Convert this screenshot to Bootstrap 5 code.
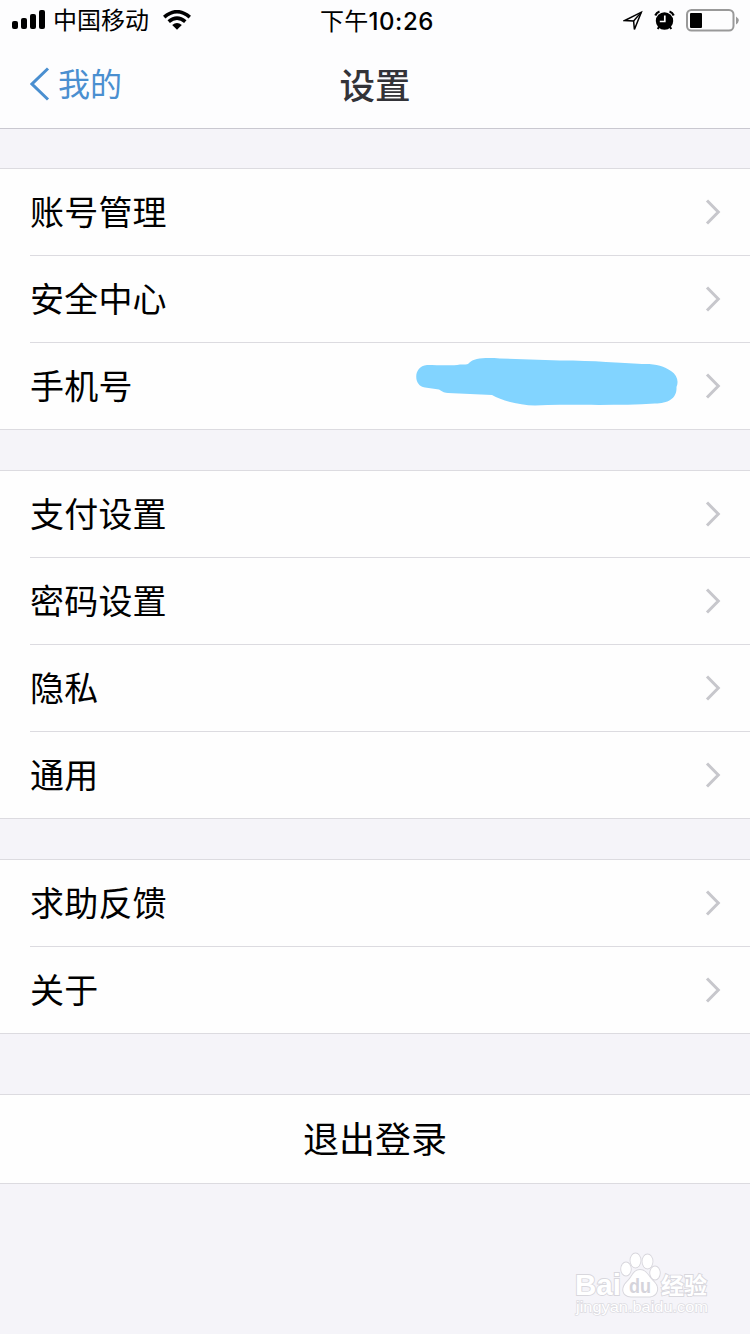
<!DOCTYPE html>
<html lang="zh-CN">
<head>
<meta charset="utf-8">
<meta name="viewport" content="width=device-width, initial-scale=1">
<title>设置</title>
<link href="https://cdn.jsdelivr.net/npm/bootstrap@5.3.0/dist/css/bootstrap.min.css" rel="stylesheet">
<style>
body{font-family:"Liberation Sans","Noto Sans CJK SC",sans-serif;background:#f5f4f9;color:#000;min-height:1334px;overflow-x:hidden}
.topbar{height:129px;background:#fdfdfe;border-bottom:1px solid #c9c8d0;margin-bottom:39px}
.status{height:40px;font-size:24px;line-height:40px}
.status-left{padding-left:12px;width:300px}
.status-left span{padding:2px 0 0 7px}
.status-right{padding-right:11px;width:300px}
.clock{font-family:Inter,"Noto Sans CJK SC",sans-serif;font-weight:500;font-size:24px;letter-spacing:.6px;padding-left:4px}
.clock .zh{font-family:"Noto Sans CJK SC",sans-serif;font-weight:400;letter-spacing:.2px}
.titlebar{height:88px}
.back{color:#4a8fd0;font-size:32px;line-height:40px;padding-left:30px;width:250px}
.back span{padding-top:2px}
.heading{font-size:35.5px;font-weight:500;line-height:40px;color:#333338;font-family:"Noto Sans CJK SC",sans-serif}
.settings{background:#fefefe;border-top:1px solid #dcdbe0;border-bottom:1px solid #dcdbe0;margin-bottom:40px;padding-left:30px;border-radius:0}
.settings .list-group-item{height:87px;border:0;border-bottom:1px solid #dcdbe0;background:transparent;color:#000;font-size:34px;line-height:40px;letter-spacing:.2px;padding:0 29px 0 0}
.settings .list-group-item span{padding-top:2px}
.settings .list-group-item:last-child{height:86px;border-bottom:0}
.logout{height:90px;font-size:36px;margin-top:60px;color:#000;background:#fefefe;border:solid #dcdbe0;border-width:1px 0;border-radius:0}
.logout:hover{background:#fff}
.logout span{padding-top:4px}
.scribble{margin:0 26px 8px 0}
.brand{right:38px;bottom:12px}
</style>
</head>
<body class="position-relative">
<header class="topbar">
  <div class="status d-flex justify-content-between">
    <div class="status-left d-flex align-items-center">
      <svg width="34" height="22" viewBox="0 0 34 22"><rect x="0" y="12" width="6" height="8" rx="2"/><rect x="9" y="9" width="6" height="11" rx="2"/><rect x="18" y="5" width="6" height="15" rx="2"/><rect x="27" y="1" width="6" height="19" rx="2"/></svg>
      <span>中国移动</span>
      <svg style="margin-left:14px" width="28" height="20" viewBox="0 0 28 20"><g fill="none" stroke="#000" stroke-width="3.6"><path d="M1.2 7.2Q14-3.8 26.800 7.200"/><path d="M5.700 11.700Q14 4.500 22.300 11.700"/></g><path d="M9.200 15Q14 11.200 18.800 15L14 19.700Z"/></svg>
    </div>
    <div class="clock"><span class="zh">下午</span>10:26</div>
    <div class="status-right d-flex align-items-center justify-content-end">
      <svg width="116" height="26" viewBox="0 0 116 26">
        <path d="M1.800 13.500 18.300 5.200 11.400 22.500 10.600 14Z" fill="none" stroke="#000" stroke-width="1.500"/><path d="M10.600 14 18.300 5.200" stroke="#000" stroke-width="1.400"/>
        <circle cx="41.500" cy="14" r="8.700"/><path d="M32.300 8.500Q33.500 5.500 36.500 4.500M50.700 8.500Q49.500 5.500 46.500 4.500" fill="none" stroke="#000" stroke-width="2.200"/><path d="m36 20-1.300 2m12.300-2 1.300 2" stroke="#000" stroke-width="2"/><path d="M41.800 8.500v6h-5" fill="none" stroke="#fff" stroke-width="1.700"/>
        <rect x="64" y="3" width="46.500" height="20.500" rx="4.500" fill="none" stroke="#999" stroke-width="2"/><rect x="67" y="6" width="12" height="15" rx="1"/><path d="M113 9.500q5.500 4 0 8Z" fill="#999"/>
      </svg>
    </div>
  </div>
  <nav class="titlebar d-flex align-items-center justify-content-between">
    <div class="back d-flex align-items-center"><svg width="20" height="34" viewBox="0 0 20 34"><path d="M18 1.500 2 17 18 32.500" fill="none" stroke="#4a8fd0" stroke-width="3"/></svg><span class="ps-2">我的</span></div>
    <h1 class="heading m-0">设置</h1>
    <div class="back"></div>
  </nav>
</header>
<svg class="d-none"><symbol id="chev" viewBox="0 0 16 28"><path d="M2 2.500 13.300 14 2 25.500" fill="none" stroke="#c7c7cc" stroke-width="3"/></symbol></svg>
<main>
  <div class="list-group settings">
    <div class="list-group-item d-flex align-items-center justify-content-between"><span>账号管理</span><svg width="16" height="28"><use href="#chev"/></svg></div>
    <div class="list-group-item d-flex align-items-center justify-content-between"><span>安全中心</span><svg width="16" height="28"><use href="#chev"/></svg></div>
    <div class="list-group-item d-flex align-items-center"><span class="me-auto">手机号</span>
      <svg class="scribble" width="263" height="56" viewBox="416 354 263 56"><path fill="#82d4ff" d="M427 365C438 365 452 366 460 364.500Q468 365 469 363C474 358 485 357.500 500 358.500L560 360.500C595 360.500 620 363 642 364C655 363.500 664 366 671 371C677 375 679 381 676.500 387C677 399 668 403 655 403.500C620 406 580 404 535 405.500C520 405 502 401 492 395L448 393Q444 393 439 389.500L425 387.500C413 386 413 366 427 365Z"/></svg>
      <svg width="16" height="28"><use href="#chev"/></svg></div>
  </div>
  <div class="list-group settings">
    <div class="list-group-item d-flex align-items-center justify-content-between"><span>支付设置</span><svg width="16" height="28"><use href="#chev"/></svg></div>
    <div class="list-group-item d-flex align-items-center justify-content-between"><span>密码设置</span><svg width="16" height="28"><use href="#chev"/></svg></div>
    <div class="list-group-item d-flex align-items-center justify-content-between"><span>隐私</span><svg width="16" height="28"><use href="#chev"/></svg></div>
    <div class="list-group-item d-flex align-items-center justify-content-between"><span>通用</span><svg width="16" height="28"><use href="#chev"/></svg></div>
  </div>
  <div class="list-group settings mb-0">
    <div class="list-group-item d-flex align-items-center justify-content-between"><span>求助反馈</span><svg width="16" height="28"><use href="#chev"/></svg></div>
    <div class="list-group-item d-flex align-items-center justify-content-between"><span>关于</span><svg width="16" height="28"><use href="#chev"/></svg></div>
  </div>
  <button class="logout btn w-100 d-flex align-items-center justify-content-center p-0" type="button"><span>退出登录</span></button>
</main>
<svg class="brand position-absolute" width="140" height="72" viewBox="572 1250 140 72" font-family="Liberation Sans,Noto Sans CJK SC,sans-serif" font-weight="700">
  <g fill="#fff" stroke="#d8d7dd" stroke-width="1.800" paint-order="stroke">
    <text x="575" y="1295" font-size="29" textLength="46" lengthAdjust="spacingAndGlyphs">Bai</text>
    <ellipse cx="626" cy="1269" rx="4.800" ry="6.500"/><ellipse cx="635.500" cy="1260.500" rx="5" ry="7"/><ellipse cx="647.500" cy="1261.500" rx="5" ry="7"/><ellipse cx="655" cy="1273" rx="4.800" ry="6.500"/>
    <path d="M640 1270C647 1270 649 1278 654 1282C660 1288 657 1296 650 1296.500H631C622 1296 621 1288 627 1282C632 1278 633 1270 640 1270Z"/>
    <text x="661" y="1294" font-size="23" textLength="46" lengthAdjust="spacingAndGlyphs">经验</text>
  </g>
  <text x="629" y="1293" font-size="20" fill="#d5d4db" textLength="22" lengthAdjust="spacingAndGlyphs">du</text>
  <text x="576" y="1312" font-size="15" font-weight="400" fill="#fff" stroke="#dddce2" stroke-width="1.400" paint-order="stroke" textLength="132" lengthAdjust="spacingAndGlyphs">jingyan.baidu.com</text>
</svg>
<script src="https://cdn.jsdelivr.net/npm/bootstrap@5.3.0/dist/js/bootstrap.bundle.min.js"></script>
</body>
</html>
